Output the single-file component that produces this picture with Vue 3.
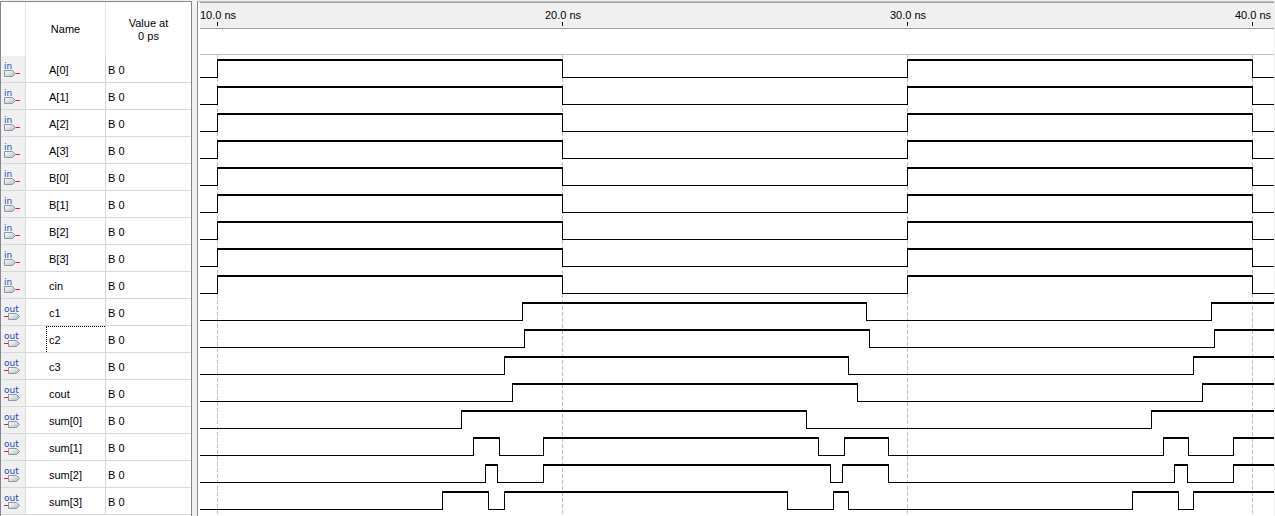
<script setup>
const ROW = 27

const clock = [17, 362, 707, 1052]
const ticks = clock.map((x, i) => ({ x, label: `${(i + 1) * 10}.0 ns` }))

// Each edge toggles the signal; every signal starts low.
const signals = [
  ...['A[0]', 'A[1]', 'A[2]', 'A[3]', 'B[0]', 'B[1]', 'B[2]', 'B[3]', 'cin'].map((name) => ({
    name,
    dir: 'in',
    edges: clock
  })),
  { name: 'c1', dir: 'out', edges: [322, 666, 1011] },
  { name: 'c2', dir: 'out', edges: [324, 669, 1014], focused: true },
  { name: 'c3', dir: 'out', edges: [304, 648, 993] },
  { name: 'cout', dir: 'out', edges: [312, 657, 1002] },
  { name: 'sum[0]', dir: 'out', edges: [261, 606, 951] },
  { name: 'sum[1]', dir: 'out', edges: [273, 299, 343, 618, 644, 688, 963, 988, 1033] },
  { name: 'sum[2]', dir: 'out', edges: [285, 297, 343, 630, 642, 688, 974, 987, 1033] },
  { name: 'sum[3]', dir: 'out', edges: [242, 288, 304, 587, 633, 648, 932, 978, 993] }
]

const END = 4000

function wave(edges, row) {
  const y = row * ROW + 2
  let d = ''
  let x = 0
  let high = false
  for (const e of [...edges, END]) {
    d += high ? `M${x} ${y + 3}H${e}v2H${x}z` : `M${x} ${y + 21}H${e}v1H${x}z`
    if (e !== END) d += `M${e} ${y + 3}h1v19h-1z`
    x = e
    high = !high
  }
  return d
}

const waves = signals.map((s, i) => ({ name: s.name, d: wave(s.edges, i) }))
const waveHeight = signals.length * ROW + 2
</script>

<template>
  <main class="viewer">
    <section class="signals" aria-label="Signals">
      <table>
        <colgroup>
          <col class="c-icon" />
          <col class="c-name" />
          <col class="c-value" />
        </colgroup>
        <thead>
          <tr>
            <th></th>
            <th scope="col">Name</th>
            <th scope="col">Value at<br />0 ps</th>
          </tr>
        </thead>
        <tbody>
          <tr v-for="s in signals" :key="s.name">
            <td class="pin">
              <svg width="24" height="26" viewBox="0 0 24 26" aria-hidden="true">
                <defs>
                  <linearGradient id="metal" x1="0" y1="0" x2="1" y2="1">
                    <stop offset="0" stop-color="#ffffff" />
                    <stop offset="0.5" stop-color="#dcdcdc" />
                    <stop offset="1" stop-color="#b0b4bc" />
                  </linearGradient>
                </defs>
                <text x="3" y="13">{{ s.dir }}</text>
                <g v-if="s.dir === 'in'">
                  <path class="lead" d="M14 17H19V18H14Z" />
                  <path class="body" d="M3.500 14.500H11.500L14.500 17.500L11.500 20.500H3.500Z" />
                </g>
                <g v-else>
                  <path class="lead" d="M3 17H7V18H3Z" />
                  <path class="body" d="M7.500 14.500H15.500L18.500 17.500L15.500 20.500H7.500Z" />
                </g>
              </svg>
            </td>
            <td class="name"><span :class="{ focused: s.focused }">{{ s.name }}</span></td>
            <td class="value">B 0</td>
          </tr>
        </tbody>
      </table>
    </section>

    <div class="splitter"></div>

    <section class="chart" aria-label="Waveforms">
      <svg class="ruler" width="100%" height="25">
        <g v-for="t in ticks" :key="t.x">
          <text :x="t.x + 1" y="16" text-anchor="middle">{{ t.label }}</text>
          <rect :x="t.x" y="19" width="1" height="4" />
        </g>
      </svg>
      <div class="lane"></div>
      <svg class="waves" width="100%" :height="waveHeight" shape-rendering="crispEdges">
        <line
          v-for="t in ticks"
          :key="t.x"
          class="grid"
          :x1="t.x + 0.5"
          :x2="t.x + 0.5"
          y1="0"
          :y2="waveHeight"
        />
        <line class="top" x1="0" x2="100%" y1="0.5" y2="0.5" />
        <path v-for="w in waves" :key="w.name" :d="w.d" />
      </svg>
    </section>
  </main>
</template>

<style>
body {
  margin: 0;
  background: #fff;
}
</style>

<style scoped>
.viewer {
  display: flex;
  box-sizing: border-box;
  min-height: 100vh;
  overflow: hidden;
  background: #f0f0f0;
  color: #000;
  font-family: "Liberation Sans", Arial, sans-serif;
  font-size: 11px;
  line-height: 13px;
}

.signals {
  flex: none;
  margin-top: 1px;
  background: #fff;
  border: 1px solid #828790;
  border-bottom: 0;
}

table {
  table-layout: fixed;
  width: 190px;
  border-collapse: separate;
  border-spacing: 0;
}

.c-icon {
  width: 25px;
}

.c-name {
  width: 80px;
}

.c-value {
  width: 85px;
}

th,
td {
  box-sizing: border-box;
  padding: 0;
  border-right: 1px solid #d8d8d8;
}

th {
  height: 54px;
  padding-top: 1px;
  font-weight: normal;
  text-align: center;
  border-color: #e5e5e5;
}

td {
  height: 27px;
  border-bottom: 1px solid #d8d8d8;
}

th:last-child,
td:last-child {
  border-right: 0;
}

.pin {
  background: #f0f0f0;
}

.pin svg {
  display: block;
}

.pin text {
  fill: #2448b0;
  font-family: "DejaVu Sans", sans-serif;
  font-size: 9px;
}

.lead {
  fill: #ed1c24;
}

.body {
  fill: url(#metal);
  stroke: #8798ab;
}

.name span {
  display: block;
  box-sizing: border-box;
  height: 26px;
  margin-left: 20px;
  padding-left: 2px;
  line-height: 28px;
  border: 1px dotted transparent;
  border-width: 0 0 0 1px;
}

.name .focused {
  border-width: 1px 0 0 1px;
  border-color: #000;
  line-height: 26px;
}

.value {
  padding: 2px 0 0 2px;
}

.splitter {
  flex: none;
  width: 5px;
}

.chart {
  flex: 1;
  min-width: 0;
  margin: 1px 1px 0 0;
  padding-left: 2px;
  overflow: hidden;
  background: #fff;
  border-top: 1px solid #c0c0c0;
  border-left: 1px solid #828790;
}

.chart svg {
  display: block;
}

.ruler {
  box-sizing: content-box;
  background: #f0f0f0;
  border-top: 1px solid #a0a0a0;
  border-bottom: 1px solid #a0a0a0;
}

.lane {
  height: 25px;
}

.grid {
  stroke: #c0c0c0;
  stroke-dasharray: 4 2;
}

.top {
  stroke: #c0c0c0;
}
</style>
